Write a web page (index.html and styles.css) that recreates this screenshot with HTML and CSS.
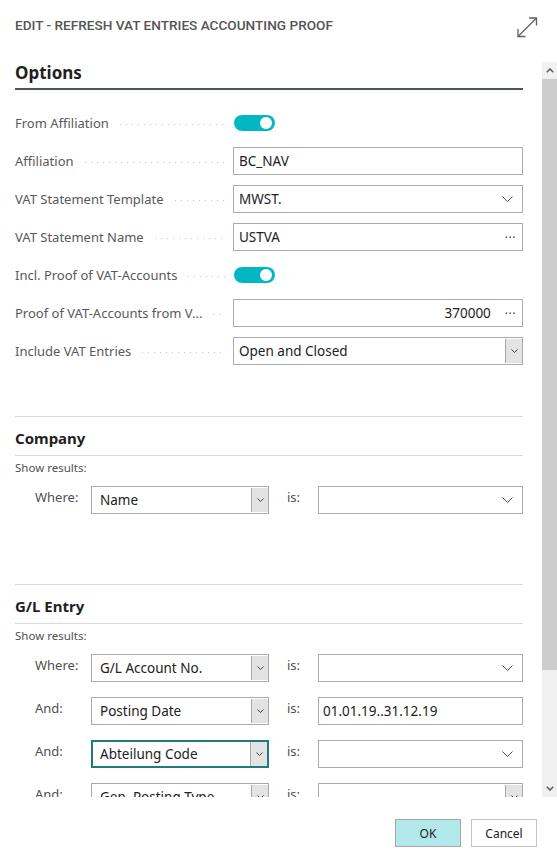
FILE: index.html
```html
<!doctype html>
<html lang="en">
<head>
    <!-- Title of the page -->
    <title>Edit - Refresh VAT Entries Accounting Proof</title>
    <meta charset="utf-8" />
    <link rel="stylesheet" href="styles.css">
</head>
<body>
<div class="dialog">
    <!-- Caption bar -->
    <div class="dialog-head">
        <span class="dialog-title">Edit - Refresh VAT Entries Accounting Proof</span>
        <svg class="expand-icon" width="22" height="21" viewBox="0 0 22 21">
            <path d="M2 19.5 L20.5 1" />
            <path d="M13 1 H20.5 V8.5" />
            <path d="M2 12 V19.5 H9.5" />
        </svg>
    </div>

    <!-- Request page -->
    <div class="dialog-body">
        <div class="scroll-area">

            <!-- Options -->
            <section class="options">
                <h2 class="options-title">Options</h2>

                <div class="field-row">
                    <div class="field-label"><span>From Affiliation</span><i class="leader"></i></div>
                    <div class="field-value"><span class="toggle"></span></div>
                </div>

                <div class="field-row">
                    <div class="field-label"><span>Affiliation</span><i class="leader"></i></div>
                    <div class="field-value">
                        <div class="input"><span class="input-text">BC_NAV</span></div>
                    </div>
                </div>

                <div class="field-row">
                    <div class="field-label"><span>VAT Statement Template</span><i class="leader"></i></div>
                    <div class="field-value">
                        <div class="input">
                            <span class="input-text">MWST.</span>
                            <svg class="chevron" width="11" height="6" viewBox="0 0 11 6"><path d="M0.5 0.5 L5.5 5.5 L10.5 0.5" /></svg>
                        </div>
                    </div>
                </div>

                <div class="field-row">
                    <div class="field-label"><span>VAT Statement Name</span><i class="leader"></i></div>
                    <div class="field-value">
                        <div class="input">
                            <span class="input-text">USTVA</span>
                            <span class="lookup">&middot;&middot;&middot;</span>
                        </div>
                    </div>
                </div>

                <div class="field-row">
                    <div class="field-label"><span>Incl. Proof of VAT-Accounts</span><i class="leader"></i></div>
                    <div class="field-value"><span class="toggle"></span></div>
                </div>

                <div class="field-row">
                    <div class="field-label"><span>Proof of VAT-Accounts from V...</span><i class="leader"></i></div>
                    <div class="field-value">
                        <div class="input">
                            <span class="input-text number">370000</span>
                            <span class="lookup">&middot;&middot;&middot;</span>
                        </div>
                    </div>
                </div>

                <div class="field-row">
                    <div class="field-label"><span>Include VAT Entries</span><i class="leader"></i></div>
                    <div class="field-value">
                        <div class="input select">
                            <span class="input-text">Open and Closed</span>
                            <span class="select-btn"><svg width="7" height="4" viewBox="0 0 7 4"><path d="M0.5 0.5 L3.5 3.5 L6.5 0.5" /></svg></span>
                        </div>
                    </div>
                </div>
            </section>

            <!-- Company filter -->
            <section class="filter-section company">
                <h3 class="filter-title">Company</h3>
                <div class="show-results">Show results:</div>
                <div class="filter-rows">
                    <div class="filter-row">
                        <span class="filter-label">Where:</span>
                        <div class="input select filter-field">
                            <span class="input-text">Name</span>
                            <span class="select-btn"><svg width="7" height="4" viewBox="0 0 7 4"><path d="M0.5 0.5 L3.5 3.5 L6.5 0.5" /></svg></span>
                        </div>
                        <span class="is-label">is:</span>
                        <div class="input filter-value">
                            <span class="input-text"></span>
                            <svg class="chevron" width="11" height="6" viewBox="0 0 11 6"><path d="M0.5 0.5 L5.5 5.5 L10.5 0.5" /></svg>
                        </div>
                    </div>
                </div>
            </section>

            <!-- G/L Entry filter -->
            <section class="filter-section">
                <h3 class="filter-title">G/L Entry</h3>
                <div class="show-results">Show results:</div>
                <div class="filter-rows">
                    <div class="filter-row">
                        <span class="filter-label">Where:</span>
                        <div class="input select filter-field">
                            <span class="input-text">G/L Account No.</span>
                            <span class="select-btn"><svg width="7" height="4" viewBox="0 0 7 4"><path d="M0.5 0.5 L3.5 3.5 L6.5 0.5" /></svg></span>
                        </div>
                        <span class="is-label">is:</span>
                        <div class="input filter-value">
                            <span class="input-text"></span>
                            <svg class="chevron" width="11" height="6" viewBox="0 0 11 6"><path d="M0.5 0.5 L5.5 5.5 L10.5 0.5" /></svg>
                        </div>
                    </div>

                    <div class="filter-row">
                        <span class="filter-label">And:</span>
                        <div class="input select filter-field">
                            <span class="input-text">Posting Date</span>
                            <span class="select-btn"><svg width="7" height="4" viewBox="0 0 7 4"><path d="M0.5 0.5 L3.5 3.5 L6.5 0.5" /></svg></span>
                        </div>
                        <span class="is-label">is:</span>
                        <div class="input filter-value">
                            <span class="input-text">01.01.19..31.12.19</span>
                        </div>
                    </div>

                    <div class="filter-row">
                        <span class="filter-label">And:</span>
                        <div class="input select filter-field focused">
                            <span class="input-text">Abteilung Code</span>
                            <span class="select-btn"><svg width="7" height="4" viewBox="0 0 7 4"><path d="M0.5 0.5 L3.5 3.5 L6.5 0.5" /></svg></span>
                        </div>
                        <span class="is-label">is:</span>
                        <div class="input filter-value">
                            <span class="input-text"></span>
                            <svg class="chevron" width="11" height="6" viewBox="0 0 11 6"><path d="M0.5 0.5 L5.5 5.5 L10.5 0.5" /></svg>
                        </div>
                    </div>

                    <div class="filter-row">
                        <span class="filter-label">And:</span>
                        <div class="input select filter-field">
                            <span class="input-text">Gen. Posting Type</span>
                            <span class="select-btn"><svg width="7" height="4" viewBox="0 0 7 4"><path d="M0.5 0.5 L3.5 3.5 L6.5 0.5" /></svg></span>
                        </div>
                        <span class="is-label">is:</span>
                        <div class="input select filter-value">
                            <span class="input-text"></span>
                            <span class="select-btn"><svg width="7" height="4" viewBox="0 0 7 4"><path d="M0.5 0.5 L3.5 3.5 L6.5 0.5" /></svg></span>
                        </div>
                    </div>
                </div>
            </section>
        </div>

        <!-- Scrollbar -->
        <div class="scrollbar">
            <div class="sb-btn"><svg width="8" height="5" viewBox="0 0 8 5"><path d="M0.8 4.2 L4 1 L7.2 4.2" /></svg></div>
            <div class="sb-thumb"></div>
            <div class="sb-track"></div>
            <div class="sb-btn"><svg width="8" height="5" viewBox="0 0 8 5"><path d="M0.8 0.8 L4 4 L7.2 0.8" /></svg></div>
        </div>
    </div>

    <!-- Actions -->
    <div class="dialog-foot">
        <button class="btn btn-primary">OK</button>
        <button class="btn">Cancel</button>
    </div>
</div>
</body>
</html>
```

FILE: styles.css
```css
body {
    margin: 0;
    background-color: #fff;
    font-family: 'Noto Sans', 'Open Sans', sans-serif;
    color: #212121;
}

.dialog {
    width: 557px;
    height: 859px;
    display: flex;
    flex-direction: column;
}

/* Caption bar */
.dialog-head {
    height: 62px;
    flex: none;
    display: flex;
    align-items: flex-start;
    justify-content: space-between;
    padding: 0 19px 0 15px;
    box-sizing: border-box;
}

.dialog-title {
    margin-top: 16px;
    font-family: 'Roboto', sans-serif;
    font-weight: 500;
    font-size: 13.6px;
    line-height: 18px;
    text-transform: uppercase;
    color: #555;
}

.expand-icon {
    margin-top: 17px;
    fill: none;
    stroke: #606060;
    stroke-width: 1.3;
}

/* Body with scroll area */
.dialog-body {
    height: 735px;
    flex: none;
    display: flex;
}

.scroll-area {
    flex: 1;
    overflow: hidden;
    padding: 0 19px 0 15px;
}

/* Options */
.options {
    padding-bottom: 46px;
}

.options-title {
    margin: 0;
    font-size: 17px;
    font-weight: 700;
    line-height: 22px;
    padding-bottom: 4px;
    border-bottom: 2px solid #4b5461;
    color: #1f1f1f;
}

.options .field-row:first-of-type {
    margin-top: 14px;
}

.field-row {
    height: 38px;
    display: flex;
    align-items: center;
}

.field-label {
    width: 218px;
    flex: none;
    display: flex;
    align-items: center;
    font-size: 13px;
    color: #595959;
    white-space: nowrap;
}

.leader {
    flex: 1;
    height: 1px;
    margin: 2px 8px 0 11px;
    background-image: linear-gradient(to right, #c4c4c4 1px, transparent 1px);
    background-size: 6px 1px;
    background-repeat: repeat-x;
}

.field-value {
    flex: 1;
    display: flex;
    align-items: center;
}

.toggle {
    position: relative;
    width: 41px;
    height: 16px;
    margin-left: 1px;
    border-radius: 8px;
    background-color: #00b7c3;
}

.toggle::after {
    content: '';
    position: absolute;
    top: 2px;
    right: 3px;
    width: 12px;
    height: 12px;
    border-radius: 50%;
    background-color: #fff;
}

/* Text boxes and selects */
.input {
    flex: 1;
    height: 28px;
    box-sizing: border-box;
    border: 1px solid #ababab;
    display: flex;
    align-items: center;
    padding: 0 9px 0 5px;
    font-size: 13.5px;
    color: #212121;
    background-color: #fff;
}

.input-text {
    flex: 1;
    white-space: nowrap;
    overflow: hidden;
}

.input-text.number {
    text-align: right;
    padding-right: 14px;
}

.chevron {
    fill: none;
    stroke: #505050;
    stroke-width: 1;
}

.lookup {
    font-size: 12px;
    letter-spacing: 0.5px;
    color: #444;
    margin-right: -3px;
}

.input.select {
    padding-right: 0;
}

.select-btn {
    align-self: stretch;
    width: 16px;
    display: flex;
    align-items: center;
    justify-content: center;
    margin: 1px 0 1px 0;
    border-left: 1px solid #a8a8a8;
    background-color: #e3e3e3;
}

.select-btn svg {
    fill: none;
    stroke: #404040;
    stroke-width: 1;
}

/* Filter sections */
.filter-section {
    border-top: 1px solid #d6d9dd;
}

.filter-section.company {
    padding-bottom: 70px;
}

.filter-title {
    margin: 0;
    padding: 11px 0 6px;
    font-size: 15px;
    font-weight: 700;
    line-height: 21px;
    border-bottom: 1px solid #d6d9dd;
    color: #1f1f1f;
}

.show-results {
    padding-top: 4px;
    font-size: 11.5px;
    line-height: 16px;
    color: #505050;
}

.filter-rows {
    padding-top: 10px;
    display: flex;
    flex-direction: column;
    gap: 15px;
}

.filter-row {
    display: flex;
    align-items: flex-start;
    padding-left: 20px;
}

.filter-label {
    width: 56px;
    flex: none;
    font-size: 13px;
    line-height: 22px;
    color: #505050;
}

.filter-field {
    flex: none;
    width: 178px;
    padding-left: 8px;
}

.filter-field.focused {
    border: 2px solid #23797f;
    padding-left: 7px;
}

.filter-field.focused .select-btn {
    margin: 0;
}

.is-label {
    width: 31px;
    flex: none;
    padding-left: 18px;
    font-size: 13px;
    line-height: 22px;
    color: #505050;
}

.filter-value {
    padding-left: 4px;
}

/* Scrollbar */
.scrollbar {
    width: 15px;
    flex: none;
    display: flex;
    flex-direction: column;
    background-color: #f0f0f0;
}

.sb-btn {
    height: 17px;
    display: flex;
    align-items: center;
    justify-content: center;
}

.sb-btn svg {
    fill: none;
    stroke: #606060;
    stroke-width: 1.6;
}

.sb-thumb {
    height: 591px;
    background-color: #cdcdcd;
}

.sb-track {
    flex: 1;
}

/* Actions */
.dialog-foot {
    flex: 1;
    display: flex;
    justify-content: flex-end;
    align-items: flex-start;
    gap: 10px;
    padding: 22px 20px 0 0;
}

.btn {
    width: 66px;
    height: 28px;
    border: 1px solid #c4c4c4;
    background-color: #fff;
    font-family: 'Noto Sans', 'Open Sans', sans-serif;
    font-size: 12px;
    color: #212121;
    padding: 0;
}

.btn-primary {
    background-color: #b2e8ea;
    border-color: #a6a6a6;
}
```
